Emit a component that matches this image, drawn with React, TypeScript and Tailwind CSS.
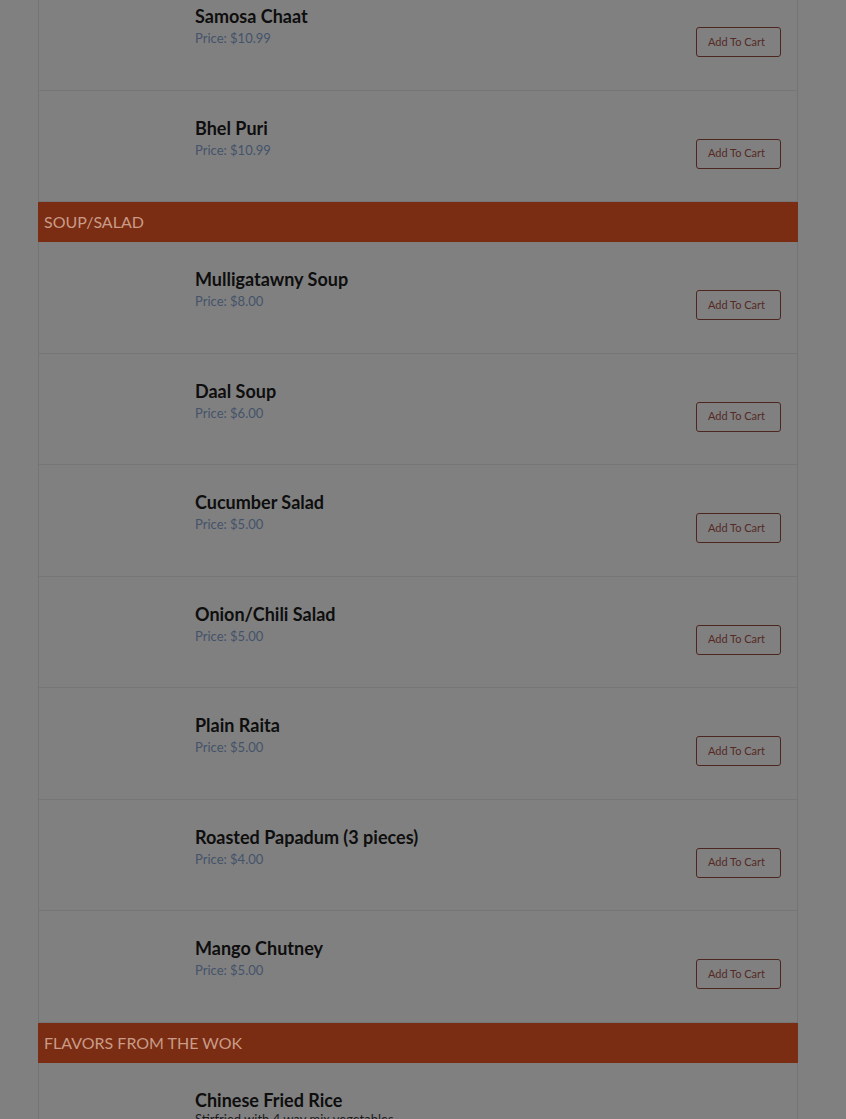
import React from 'react';

type Item = { name: string; price: string; desc?: string };
type Section = { title?: string; items: Item[] };

const sections: Section[] = [
  {
    items: [
      { name: 'Samosa Chaat', price: '$10.99' },
      { name: 'Bhel Puri', price: '$10.99' },
    ],
  },
  {
    title: 'SOUP/SALAD',
    items: [
      { name: 'Mulligatawny Soup', price: '$8.00' },
      { name: 'Daal Soup', price: '$6.00' },
      { name: 'Cucumber Salad', price: '$5.00' },
      { name: 'Onion/Chili Salad', price: '$5.00' },
      { name: 'Plain Raita', price: '$5.00' },
      { name: 'Roasted Papadum (3 pieces)', price: '$4.00' },
      { name: 'Mango Chutney', price: '$5.00' },
    ],
  },
  {
    title: 'FLAVORS FROM THE WOK',
    items: [{ name: 'Chinese Fried Rice', price: '$10.99', desc: 'Stirfried with 4 way mix vegetables' }],
  },
];

const MenuRow: React.FC<{ item: Item }> = ({ item }) => (
  <div className="flex h-[111.5px] border-b border-[#767676]">
    {/* image slot, empty while loading */}
    <div className="w-[156px] shrink-0" />
    <div className="flex-1 pt-[26px]">
      <h3 className="text-[18px] leading-[22px] font-bold text-[#0e0e0e]">{item.name}</h3>
      {item.desc ? (
        <p className="text-[13px] leading-[16px] text-[#1c1c1c]">{item.desc}</p>
      ) : (
        <p className="pt-px text-[13px] leading-[21px] text-[#44536a]">Price: {item.price}</p>
      )}
    </div>
    <div className={item.desc ? 'pt-[72px] pr-[16px]' : 'pt-[48px] pr-[16px]'}>
      <button className="h-[30px] w-[85px] rounded-[3px] border border-[#4e2620] pr-[4px] text-[11px] text-[#552a26]">
        Add To Cart
      </button>
    </div>
  </div>
);

export default function App() {
  return (
    <div
      className="h-[1119px] overflow-hidden bg-[#808080]"
      style={{ fontFamily: 'Lato, "Liberation Sans", sans-serif' }}
    >
      <div className="-mt-[21px] ml-[38px] w-[760px] border-x border-[#747474]">
        {sections.map((section, i) => (
          <div key={i}>
            {section.title && (
              <div className="-mx-px flex h-[40px] items-center bg-[#7a2d12] pl-[6px] text-[16px] text-[#c99b88]">
                {section.title}
              </div>
            )}
            {section.items.map((item) => (
              <MenuRow key={item.name} item={item} />
            ))}
          </div>
        ))}
      </div>
    </div>
  );
}
